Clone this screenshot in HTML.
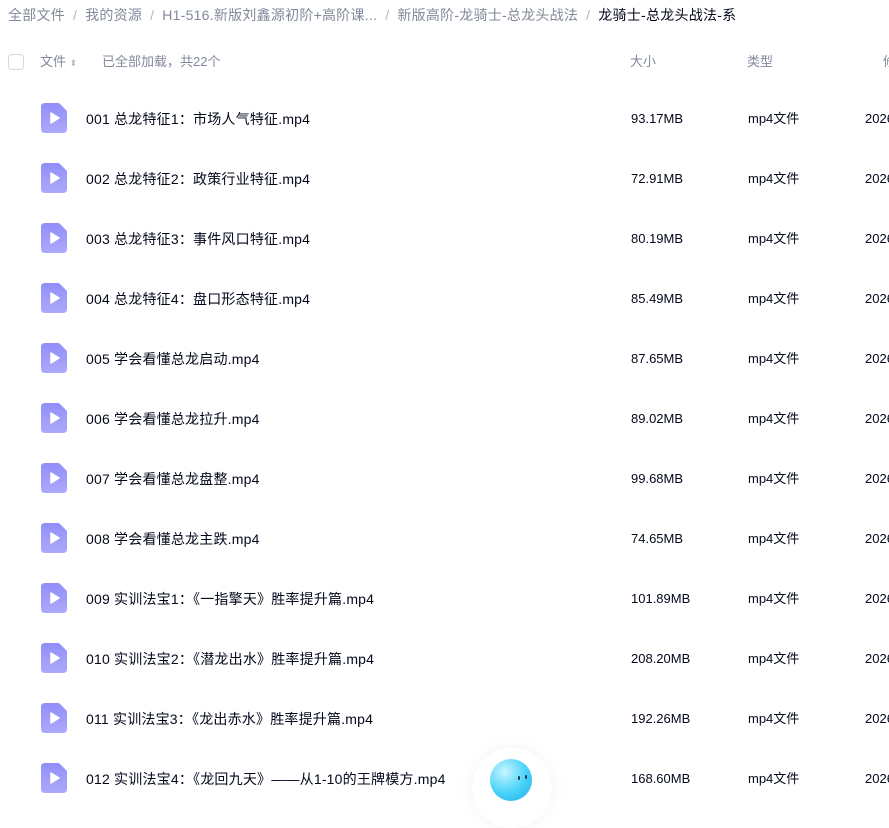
<!DOCTYPE html>
<html><head><meta charset="utf-8"><style>
*{margin:0;padding:0;box-sizing:border-box}
body{width:889px;height:809px;overflow:hidden;background:#fff;font-family:"Liberation Sans","Noto Sans CJK SC",sans-serif;position:relative;color:#03081a}
.bc{position:absolute;top:5px;left:8px;font-size:14px;color:#818999;white-space:nowrap;line-height:20px;letter-spacing:0.25px}
.bc .s{margin:0 8px;color:#b0b5bf}
.bc b{font-weight:normal;color:#03081a}
.hd{position:absolute;top:52px;left:0;width:889px;height:20px;font-size:13px;color:#818999;line-height:20px}
.cb{position:absolute;left:8px;top:2px;width:16px;height:16px;border:1px solid #d4d7de;border-radius:4px}
.row{position:absolute;left:0;width:889px;height:60px;font-size:14px;line-height:20px}
.row .ic{position:absolute;left:41px;top:14px}
.row .n{position:absolute;left:86px;top:20px;white-space:nowrap;letter-spacing:0.2px}
.row .sz{position:absolute;left:631px;top:20px;font-size:13px}
.row .tp{position:absolute;left:748px;top:20px;font-size:13px}
.row .dt{position:absolute;left:865px;top:20px;font-size:13px}
</style></head><body>
<div class="bc">全部文件<span class="s">/</span>我的资源<span class="s">/</span>H1-516.新版刘鑫源初阶+高阶课...<span class="s">/</span>新版高阶-龙骑士-总龙头战法<span class="s">/</span><b>龙骑士-总龙头战法-系</b></div>
<div class="hd"><div class="cb"></div><span style="position:absolute;left:40px">文件 <span style="font-size:9px;color:#bbb">⬍</span></span><span style="position:absolute;left:102px">已全部加载，共22个</span><span style="position:absolute;left:630px">大小</span><span style="position:absolute;left:747px">类型</span><span style="position:absolute;left:883px">修</span></div>
<div id="rows"></div>
<svg width="0" height="0" style="position:absolute"><defs><linearGradient id="g" x1="0" y1="0" x2="0" y2="1"><stop offset="0" stop-color="#908ef8"/><stop offset="1" stop-color="#ada9fc"/></linearGradient></defs></svg>
<script>
var d=[["001 总龙特征1：市场人气特征.mp4","93.17MB"],["002 总龙特征2：政策行业特征.mp4","72.91MB"],["003 总龙特征3：事件风口特征.mp4","80.19MB"],["004 总龙特征4：盘口形态特征.mp4","85.49MB"],["005 学会看懂总龙启动.mp4","87.65MB"],["006 学会看懂总龙拉升.mp4","89.02MB"],["007 学会看懂总龙盘整.mp4","99.68MB"],["008 学会看懂总龙主跌.mp4","74.65MB"],["009 实训法宝1：《一指擎天》胜率提升篇.mp4","101.89MB"],["010 实训法宝2：《潜龙出水》胜率提升篇.mp4","208.20MB"],["011 实训法宝3：《龙出赤水》胜率提升篇.mp4","192.26MB"],["012 实训法宝4：《龙回九天》——从1-10的王牌模方.mp4","168.60MB"]];
var h="";
d.forEach(function(r,i){h+='<div class="row" style="top:'+(89+i*60)+'px"><svg class="ic" width="26" height="30" viewBox="0 0 26 30"><path d="M4 0H17Q18 0 19 1L25 7Q26 8 26 9V26Q26 30 22 30H4Q0 30 0 26V4Q0 0 4 0Z" fill="url(#g)"/><path d="M10 10L18 15L10 20Z" fill="#fff" stroke="#fff" stroke-width="1.5" stroke-linejoin="round"/></svg><span class="n">'+r[0]+'</span><span class="sz">'+r[1]+'</span><span class="tp">mp4文件</span><span class="dt">2026</span></div>';});
document.getElementById("rows").innerHTML=h;
</script>
<div style="position:absolute;left:472px;top:748px;width:80px;height:80px;border-radius:50%;background:#fff;box-shadow:0 0 18px rgba(0,0,0,0.05)"></div>
<div style="position:absolute;left:490px;top:759px;width:42px;height:42px;border-radius:50%;background:radial-gradient(circle at 35% 30%,#c8f5ff,#45d2f8 55%,#22aaea)"></div>
<div style="position:absolute;left:518px;top:776px;width:2px;height:4px;background:#335;border-radius:1px"></div>
<div style="position:absolute;left:525px;top:775px;width:2px;height:4px;background:#335;border-radius:1px"></div>
</body></html>
